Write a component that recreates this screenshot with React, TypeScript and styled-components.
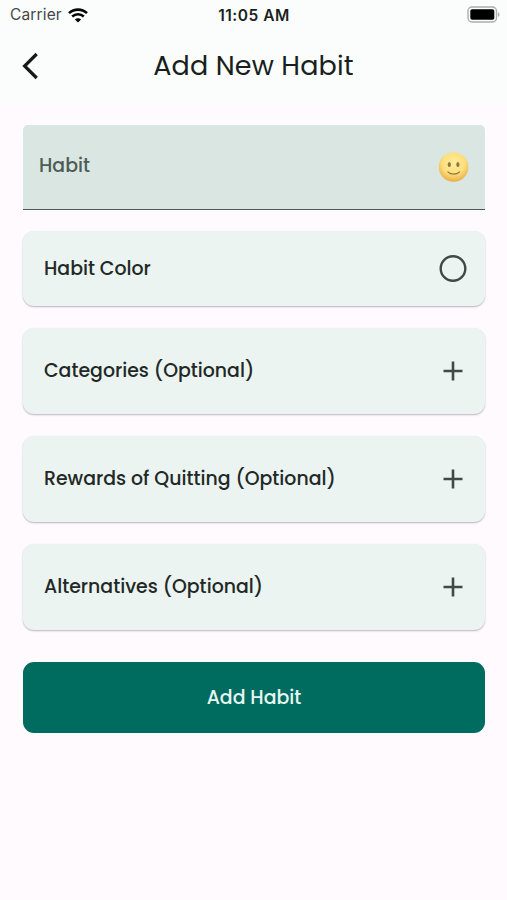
import React from "react";
import styled, { createGlobalStyle } from "styled-components";

const GlobalStyle = createGlobalStyle`
  * { box-sizing: border-box; }
  body { margin: 0; background: #fefafe; }
`;

const Screen = styled.div`
  width: 507px;
  height: 900px;
  overflow: hidden;
  background: #fefafe;
  color: #191f1d;
  font-family: Poppins, Inter, "Open Sans", sans-serif;
`;

const Top = styled.header`
  height: 104px;
  background: #fafdfb;
`;

const StatusBar = styled.div`
  height: 30px;
  display: grid;
  grid-template-columns: 1fr auto 1fr;
  align-items: center;
  padding: 0 7px 0 10px;
  font-family: Inter, sans-serif;
`;

const Carrier = styled.div`
  display: flex;
  align-items: center;
  gap: 6px;
  color: #454847;
  font-size: 15.5px;
  letter-spacing: 0.15px;
  line-height: 30px;
`;

const Clock = styled.div`
  margin-right: 2px;
  font-size: 15.5px;
  font-weight: 600;
  letter-spacing: 0.5px;
`;

const Battery = styled.div`
  display: flex;
  justify-content: flex-end;
  padding-bottom: 2px;
`;

const NavBar = styled.div`
  height: 72px;
  display: grid;
  grid-template-columns: 60px 1fr 60px;
  align-items: center;
`;

const BackButton = styled.button`
  display: flex;
  padding: 0 0 0 21px;
  border: 0;
  background: none;
`;

const Title = styled.h1`
  margin: 0;
  text-align: center;
  font-size: 27px;
  font-weight: 400;
  letter-spacing: 0.14px;
  line-height: 40px;
  white-space: nowrap;
`;

const Form = styled.main`
  display: flex;
  flex-direction: column;
  gap: 22px;
  padding: 21px 22px 0 23px;
`;

const HabitField = styled.div`
  height: 85px;
  display: flex;
  align-items: center;
  justify-content: space-between;
  padding: 0 15px 0 16px;
  background: #d9e6e1;
  border-bottom: 1.5px solid #4b5955;
  border-radius: 5px 5px 0 0;
`;

const Label = styled.span<{ $muted?: boolean }>`
  padding-bottom: ${(p) => (p.$muted ? 2 : 0)}px;
  font-size: 18.9px;
  font-weight: 500;
  line-height: 28px;
  color: ${(p) => (p.$muted ? "#4f5b57" : "#222826")};
  white-space: nowrap;
`;

const CardList = styled.div`
  display: flex;
  flex-direction: column;
  gap: 22px;
  margin-top: -1px;
`;

const Card = styled.section<{ $height: number }>`
  height: ${(p) => p.$height}px;
  display: flex;
  align-items: center;
  justify-content: space-between;
  padding: 0 17px 0 21px;
  background: #ebf4f1;
  border-radius: 11px;
  box-shadow: 0 1px 2px rgba(40, 30, 40, 0.24), 0 1px 1px rgba(40, 30, 40, 0.08);
`;

const Submit = styled.button`
  height: 71px;
  margin-top: 10px;
  padding-bottom: 1px;
  border: 0;
  border-radius: 11px;
  background: #006b5f;
  color: #e6f6f1;
  font-family: inherit;
  font-size: 18.9px;
  font-weight: 500;
`;

const WifiIcon = () => (
  <svg width="20" height="15" viewBox="0 0 20 15" fill="none" stroke="#050505">
    <path d="M1 5.1C6.1.4 13.9.4 19 5.1" strokeWidth="2.6" />
    <path d="M4.2 8.5c3.3-3 8.3-3 11.6 0" strokeWidth="2.5" />
    <path d="M10 14.4 6.9 11.4c1.8-1.6 4.4-1.6 6.2 0z" fill="#050505" stroke="none" />
  </svg>
);

const BatteryIcon = () => (
  <svg width="33" height="17" viewBox="0 0 33 17">
    <rect x="1" y="1" width="28.5" height="15" rx="4" fill="#fafdfb" stroke="#aaadab" strokeWidth="1.4" />
    <rect x="3.3" y="3.3" width="24" height="10.4" rx="1.8" fill="#000" />
    <path d="M31 6.2c2 .8 2 3.8 0 4.6z" fill="#aaadab" />
  </svg>
);

const BackIcon = () => (
  <svg width="18" height="28" viewBox="0 0 18 28" fill="none">
    <path d="M15.7 2 3.6 14l12.1 12" stroke="#151918" strokeWidth="3.2" />
  </svg>
);

const SmileIcon = () => (
  <svg width="32" height="32" viewBox="0 0 32 32">
    <defs>
      <radialGradient id="face" cx="50%" cy="36%" r="65%">
        <stop offset="0" stopColor="#ffed9b" />
        <stop offset="0.58" stopColor="#fddf7d" />
        <stop offset="1" stopColor="#e9ad43" />
      </radialGradient>
    </defs>
    <circle cx="15.6" cy="16" r="14.8" fill="url(#face)" />
    <ellipse cx="11.3" cy="13.5" rx="1.6" ry="2.5" fill="#8f7740" />
    <ellipse cx="19.9" cy="13.5" rx="1.6" ry="2.5" fill="#8f7740" />
    <path d="M9.9 20.8c3 3.1 8.7 3.1 11.7 0" fill="none" stroke="#8f7740" strokeWidth="1.2" strokeLinecap="round" />
  </svg>
);

const CircleIcon = () => (
  <svg width="30" height="30" viewBox="0 0 30 30">
    <circle cx="15" cy="14.5" r="12.3" fill="none" stroke="#3f4946" strokeWidth="2.4" />
  </svg>
);

const PlusIcon = () => (
  <svg width="30" height="30" viewBox="0 0 30 30">
    <path d="M15 5.5v19M5.5 15h19" fill="none" stroke="#3f4946" strokeWidth="2.6" />
  </svg>
);

const sections = [
  "Categories (Optional)",
  "Rewards of Quitting (Optional)",
  "Alternatives (Optional)",
];

export default function App() {
  return (
    <Screen>
      <GlobalStyle />
      <Top>
        <StatusBar>
          <Carrier>
            Carrier
            <WifiIcon />
          </Carrier>
          <Clock>11:05 AM</Clock>
          <Battery>
            <BatteryIcon />
          </Battery>
        </StatusBar>
        <NavBar>
          <BackButton aria-label="Back">
            <BackIcon />
          </BackButton>
          <Title>Add New Habit</Title>
        </NavBar>
      </Top>
      <Form>
        <HabitField>
          <Label $muted>Habit</Label>
          <SmileIcon />
        </HabitField>
        <CardList>
          <Card $height={75}>
            <Label>Habit Color</Label>
            <CircleIcon />
          </Card>
          {sections.map((label) => (
            <Card key={label} $height={86}>
              <Label>{label}</Label>
              <PlusIcon />
            </Card>
          ))}
        </CardList>
        <Submit>Add Habit</Submit>
      </Form>
    </Screen>
  );
}
